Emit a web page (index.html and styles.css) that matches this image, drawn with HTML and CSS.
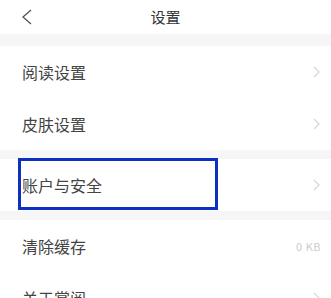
FILE: index.html
```html
<!DOCTYPE html>
<html lang="zh">
<head>
<meta charset="utf-8">
<title>设置</title>
<link rel="stylesheet" href="styles.css">
</head>
<body>
<div class="page">
  <header class="topbar">
    <span class="back">
      <svg width="12" height="16" viewBox="0 0 12 16"><polyline points="10,1 2,8 10,15" fill="none" stroke="#555" stroke-width="1.3"/></svg>
    </span>
    <h1 class="title">设置</h1>
  </header>
  <div class="gap gap-top"></div>
  <div class="row"><span class="label">阅读设置</span><span class="chev"><svg width="7" height="12" viewBox="0 0 7 12"><polyline points="1,1 6,6 1,11" fill="none" stroke="#d6d6d6" stroke-width="1.2"/></svg></span></div>
  <div class="row"><span class="label">皮肤设置</span><span class="chev"><svg width="7" height="12" viewBox="0 0 7 12"><polyline points="1,1 6,6 1,11" fill="none" stroke="#d6d6d6" stroke-width="1.2"/></svg></span></div>
  <div class="gap"></div>
  <div class="row row-marked"><span class="label">账户与安全</span><span class="chev"><svg width="7" height="12" viewBox="0 0 7 12"><polyline points="1,1 6,6 1,11" fill="none" stroke="#d6d6d6" stroke-width="1.2"/></svg></span><span class="mark"></span></div>
  <div class="gap"></div>
  <div class="row"><span class="label">清除缓存</span><span class="value">0 KB</span></div>
  <div class="row"><span class="label">关于掌阅</span><span class="chev"><svg width="7" height="12" viewBox="0 0 7 12"><polyline points="1,1 6,6 1,11" fill="none" stroke="#d6d6d6" stroke-width="1.2"/></svg></span></div>
</div>
</body>
</html>
```
FILE: styles.css
```css
html, body {
  margin: 0;
  padding: 0;
  background: #ffffff;
}
.page {
  width: 331px;
  height: 298px;
  overflow: hidden;
  font-family: "Noto Sans CJK SC", "Noto Sans", sans-serif;
  color: #444;
}
.topbar {
  height: 34px;
  position: relative;
  display: flex;
  align-items: center;
  justify-content: center;
}
.back {
  position: absolute;
  left: 21px;
  top: 9px;
  display: flex;
}
.title {
  margin: 0;
  font-size: 15px;
  font-weight: normal;
  color: #333;
  line-height: 34px;
}
.gap {
  height: 9px;
  background: #f6f6f6;
}
.gap-top {
  height: 12px;
}
.row {
  height: 52px;
  display: flex;
  align-items: center;
  justify-content: space-between;
  padding: 0 10px 0 22px;
  position: relative;
}
.label {
  font-size: 16px;
  color: #444;
}
.chev {
  display: flex;
  margin-right: 1px;
}
.value {
  font-size: 11px;
  color: #cccccc;
  letter-spacing: 0.5px;
}
.mark {
  position: absolute;
  left: 18px;
  top: -1px;
  width: 200px;
  height: 52px;
  box-sizing: border-box;
  border: 3px solid #0e2fc4;
}
```
